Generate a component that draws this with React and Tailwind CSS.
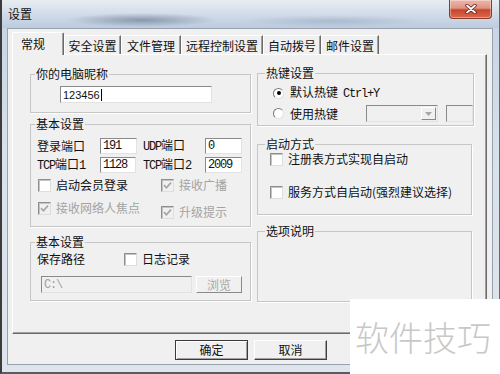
import React from 'react';

const Mono = ({ children, className = '' }) => (
  <span className={"font-['Liberation_Mono',monospace] tracking-[-1.2px] " + className}>{children}</span>
);

const Check = ({ checked, disabled }) => (
  <span
    className={
      'flex h-[13px] w-[13px] shrink-0 items-center justify-center border border-t-[#8e8e8e] border-l-[#8e8e8e] border-r-[#dedede] border-b-[#dedede] shadow-[inset_1px_1px_0_#c4c4c4] ' +
      (disabled ? 'bg-[#f0f0f0]' : 'bg-white')
    }
  >
    {checked ? (
      <svg width="9" height="9" viewBox="0 0 9 9">
        <path d="M1 4.2L3.4 6.8L8 1.6" fill="none" stroke={disabled ? '#a6a6a6' : '#000'} strokeWidth="1.7" />
      </svg>
    ) : null}
  </span>
);

const CheckItem = ({ label, checked, disabled, className = '' }) => (
  <div className={'flex items-center gap-[5px] ' + className}>
    <Check checked={checked} disabled={disabled} />
    <span className={disabled ? 'text-[#a3a3a3]' : ''}>{label}</span>
  </div>
);

const Radio = ({ checked }) => (
  <span className="flex h-[11px] w-[11px] shrink-0 items-center justify-center rounded-full border border-t-[#7a7a7a] border-l-[#7a7a7a] border-r-[#e2e2e2] border-b-[#e2e2e2] bg-white">
    {checked ? <span className="h-[4px] w-[4px] rounded-full bg-black" /> : null}
  </span>
);

const Input = ({ children, className = '', disabled }) => (
  <div
    className={
      'flex items-center border border-t-[#8a8a8a] border-l-[#8a8a8a] border-r-[#e2e2e2] border-b-[#e2e2e2] pl-[2px] ' +
      (disabled ? 'bg-[#f0f0f0] text-[#a3a3a3] ' : 'bg-white ') +
      className
    }
  >
    {children}
  </div>
);

const Group = ({ title, className = '', legend = 'ml-[4px]', children }) => (
  <fieldset className={'border border-[#c6c6c6] shadow-[1px_1px_0_#ffffff] ' + className}>
    <legend className={'px-[1px] leading-[14px] ' + legend}>{title}</legend>
    {children}
  </fieldset>
);

const tabs = [
  { name: '安全设置', cls: 'w-[57px]' },
  { name: '文件管理', cls: 'w-[60px]' },
  { name: '远程控制设置', cls: 'w-[82px]' },
  { name: '自动拨号', cls: 'w-[58px]' },
  { name: '邮件设置', cls: 'w-[58px]' },
];

export default function App() {
  return (
    <div className="relative h-[374px] w-[500px] overflow-hidden font-['Noto_Sans_CJK_SC',sans-serif] text-[12px] leading-[14px] text-[#111]">
      <div className="flex h-[374px] w-[500px] flex-col border-l-2 border-r border-b-2 border-l-[#3c3c3c] border-r-[#5f6b78] border-b-[#5c5c5c] bg-[linear-gradient(180deg,#e6ebf2_0%,#c8d5e5_7%,#d8e0ea_40%,#dfe5ec_100%)]">
        {/* title bar */}
        <div className="flex h-[28px] shrink-0 items-start justify-between bg-[radial-gradient(ellipse_75px_7px_at_140px_20px,rgba(40,60,90,0.4),transparent),radial-gradient(ellipse_90px_6px_at_330px_21px,rgba(70,100,140,0.22),transparent),linear-gradient(180deg,#e8edf2_0%,#d2dce8_50%,#bccbdf_100%)] pl-[6px] pr-[7px]">
          <span className="mt-[7px]">设置</span>
          <div className="flex h-[19px] w-[43px] items-center justify-center rounded-b-[4px] border border-t-0 border-[#8c3a2a] bg-[linear-gradient(180deg,#ebb7ab_0%,#df9482_45%,#c8452c_55%,#d86b50_100%)] shadow-[inset_0_0_0_1px_rgba(255,255,255,0.35)]">
            <svg width="12" height="10" viewBox="0 0 12 10">
              <path d="M2 1.5L10 8.5M10 1.5L2 8.5" stroke="#5a1a10" strokeWidth="3.4" strokeLinecap="round" />
              <path d="M2 1.5L10 8.5M10 1.5L2 8.5" stroke="#fff" strokeWidth="1.8" strokeLinecap="round" />
            </svg>
          </div>
        </div>

        {/* client area */}
        <div className="ml-[5px] flex h-[337px] w-[486px] flex-col border border-[#98a2ad] bg-[#f0f0f0]">
          {/* tabs */}
          <div className="flex h-[25px] shrink-0 items-end pl-[4px]">
            <div className="relative z-10 -mb-px flex h-[23px] w-[52px] items-start rounded-t-[2px] border-l border-t border-r border-l-white border-t-white border-r-[#6a6a6a] bg-[#f0f0f0] pl-[8px] pt-[4px] shadow-[inset_-1px_0_0_#a0a0a0]">
              常规
            </div>
            {tabs.map((t) => (
              <div
                key={t.name}
                className={
                  'flex h-[19px] items-start justify-center border-l border-t border-r border-l-white border-t-white border-r-[#6a6a6a] pt-[3px] shadow-[inset_-1px_0_0_#a0a0a0] ' +
                  t.cls
                }
              >
                {t.name}
              </div>
            ))}
          </div>

          {/* panel */}
          <div className="ml-[4px] flex h-[280px] w-[475px] shrink-0 items-start border border-t-white border-l-white border-r-[#6a6a6a] border-b-[#6a6a6a] shadow-[inset_-1px_-1px_0_#a0a0a0]">
            {/* left column */}
            <div className="ml-[17px] mt-[12px] flex w-[221px] flex-col">
              <Group title="你的电脑昵称" className="h-[46px]">
                <div className="pl-[29px] pt-[5px]">
                  <Input className="h-[17px] w-[152px] font-['Liberation_Sans',sans-serif] text-[11px]">
                    123456
                    <span className="ml-px h-[12px] w-px bg-black" />
                  </Input>
                </div>
              </Group>

              <Group title="基本设置" className="mt-[4px] h-[110px]">
                <div className="flex flex-col pl-[6px]">
                  <div className="mt-[7px] flex h-[16px] items-center">
                    <span className="w-[63px]">登录端口</span>
                    <Input className="h-[16px] w-[37px]"><Mono>191</Mono></Input>
                    <span className="w-[68px] pl-[6px]"><Mono>UDP</Mono>端口</span>
                    <Input className="h-[16px] w-[37px]"><Mono>0</Mono></Input>
                  </div>
                  <div className="mt-[3px] flex h-[16px] items-center">
                    <span className="w-[63px]"><Mono>TCP</Mono>端口<Mono>1</Mono></span>
                    <Input className="h-[16px] w-[36px]"><Mono>1128</Mono></Input>
                    <span className="w-[69px] pl-[7px]"><Mono>TCP</Mono>端口<Mono>2</Mono></span>
                    <Input className="h-[16px] w-[37px]"><Mono>2009</Mono></Input>
                  </div>
                  <div className="mt-[5px] flex pl-px">
                    <CheckItem label="启动会员登录" className="w-[123px]" />
                    <CheckItem label="接收广播" checked disabled />
                  </div>
                  <div className="mt-[9px] flex items-start pl-px">
                    <CheckItem label="接收网络人焦点" checked disabled className="w-[123px]" />
                    <CheckItem label="升级提示" checked disabled className="mt-[4px]" />
                  </div>
                </div>
              </Group>

              <Group title="基本设置" className="mt-[8px] h-[66px]">
                <div className="flex flex-col pl-[6px]">
                  <div className="mt-[3px] flex items-center">
                    <span className="w-[87px]">保存路径</span>
                    <CheckItem label="日志记录" />
                  </div>
                  <div className="ml-[4px] mt-[10px] flex items-center gap-[4px]">
                    <Input disabled className="h-[17px] w-[151px]"><Mono>C:\</Mono></Input>
                    <div className="flex h-[17px] w-[46px] items-center justify-center border border-t-white border-l-white border-r-[#8a8a8a] border-b-[#8a8a8a] text-[#a8a8a8]">
                      浏览
                    </div>
                  </div>
                </div>
              </Group>
            </div>

            {/* right column */}
            <div className="ml-[6px] mt-[11px] flex w-[215px] flex-col">
              <Group title="热键设置" legend="ml-[7px]" className="h-[60px]">
                <div className="flex flex-col pl-[15px]">
                  <div className="mt-[5px] flex items-center gap-[6px]">
                    <Radio checked />
                    <span>
                      默认热键<Mono className="ml-[5px]">Ctrl+Y</Mono>
                    </span>
                  </div>
                  <div className="mt-[4px] flex h-[17px] items-center gap-[6px]">
                    <Radio />
                    <span className="w-[70px]">使用热键</span>
                    <div className="flex h-[17px] w-[72px] items-center justify-end border border-t-[#8a8a8a] border-l-[#8a8a8a] border-r-[#e2e2e2] border-b-[#e2e2e2] bg-[#f0f0f0] pr-px">
                      <div className="flex h-[13px] w-[15px] items-center justify-center border border-t-white border-l-white border-r-[#8a8a8a] border-b-[#8a8a8a]">
                        <svg width="7" height="4" viewBox="0 0 7 4">
                          <path d="M0 0H7L3.5 4Z" fill="#a6a6a6" />
                        </svg>
                      </div>
                    </div>
                    <div className="ml-[2px] h-[17px] w-[27px] border border-t-[#8a8a8a] border-l-[#8a8a8a] border-r-[#e2e2e2] border-b-[#e2e2e2] bg-[#f0f0f0]" />
                  </div>
                </div>
              </Group>

              <Group title="启动方式" legend="ml-[7px]" className="mt-[11px] h-[78px]">
                <div className="flex flex-col pl-[12px]">
                  <CheckItem label="注册表方式实现自启动" className="mt-[1px]" />
                  <CheckItem label="服务方式自启动(强烈建议选择)" className="mt-[19px]" />
                </div>
              </Group>

              <Group title="选项说明" legend="ml-[7px]" className="mt-[9px] h-[78px]" />
            </div>
          </div>

          {/* buttons */}
          <div className="mt-[6px] flex justify-center gap-[6px] pl-[2px]">
            <div className="flex h-[20px] w-[73px] items-center justify-center border border-[#3a3a3a] shadow-[inset_1px_1px_0_#ffffff,inset_-1px_-1px_0_#a0a0a0]">
              确定
            </div>
            <div className="flex h-[20px] w-[73px] items-center justify-center border border-t-white border-l-white border-r-[#404040] border-b-[#404040] shadow-[inset_-1px_-1px_0_#a0a0a0]">
              取消
            </div>
          </div>
        </div>
      </div>

      {/* watermark */}
      <div className="absolute left-[350px] top-[299px] flex h-[75px] w-[150px] items-center bg-white pl-[5px]">
        <span className="text-[34px] font-light leading-none text-[#c8c8c8]">软件技巧</span>
      </div>
    </div>
  );
}
